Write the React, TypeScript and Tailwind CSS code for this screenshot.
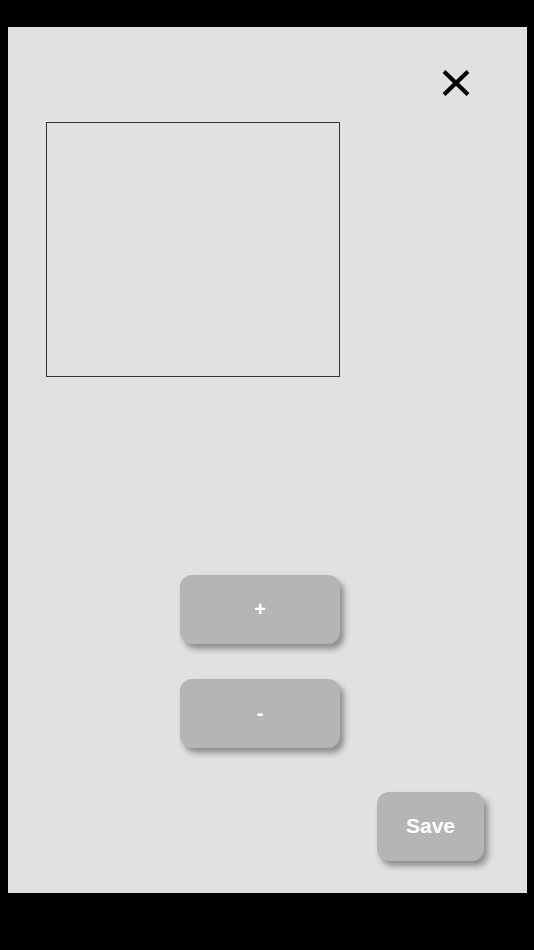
import React from 'react';

function CloseIcon() {
  return (
    <svg width="28" height="26" viewBox="0 0 28 26" className="block">
      <path d="M2 1.5 L26 24.5 M26 1.5 L2 24.5" stroke="#000" strokeWidth="4.2" strokeLinecap="butt" fill="none" />
    </svg>
  );
}

function GreyButton({ label, className }: { label: string; className?: string }) {
  return (
    <button
      className={`flex items-center justify-center rounded-[12px] bg-[#b5b5b5] text-white font-bold shadow-[4px_5px_6px_rgba(0,0,0,0.38)] ${className ?? ''}`}
      style={{ fontFamily: '"Liberation Sans", Arial, sans-serif' }}
    >
      {label}
    </button>
  );
}

export default function App() {
  return (
    <div className="w-[534px] h-[950px] bg-black overflow-hidden pt-[27px]">
      <div className="ml-[8px] w-[519px] h-[866px] bg-[#e1e1e1] flex flex-col pt-[43px]">
        <div className="flex justify-end pr-[57px]">
          <CloseIcon />
        </div>

        {/* preview area */}
        <div className="ml-[38px] mt-[26px] w-[294px] h-[255px] border border-[#333]" />

        <GreyButton label="+" className="ml-[172px] mt-[198px] w-[160px] h-[69px] text-[20px] pb-[2px]" />
        <GreyButton label="-" className="ml-[172px] mt-[35px] w-[160px] h-[69px] text-[20px] pb-[2px]" />
        <GreyButton label="Save" className="ml-[369px] mt-[44px] w-[107px] h-[69px] text-[21px] pb-[2px]" />
      </div>
    </div>
  );
}
